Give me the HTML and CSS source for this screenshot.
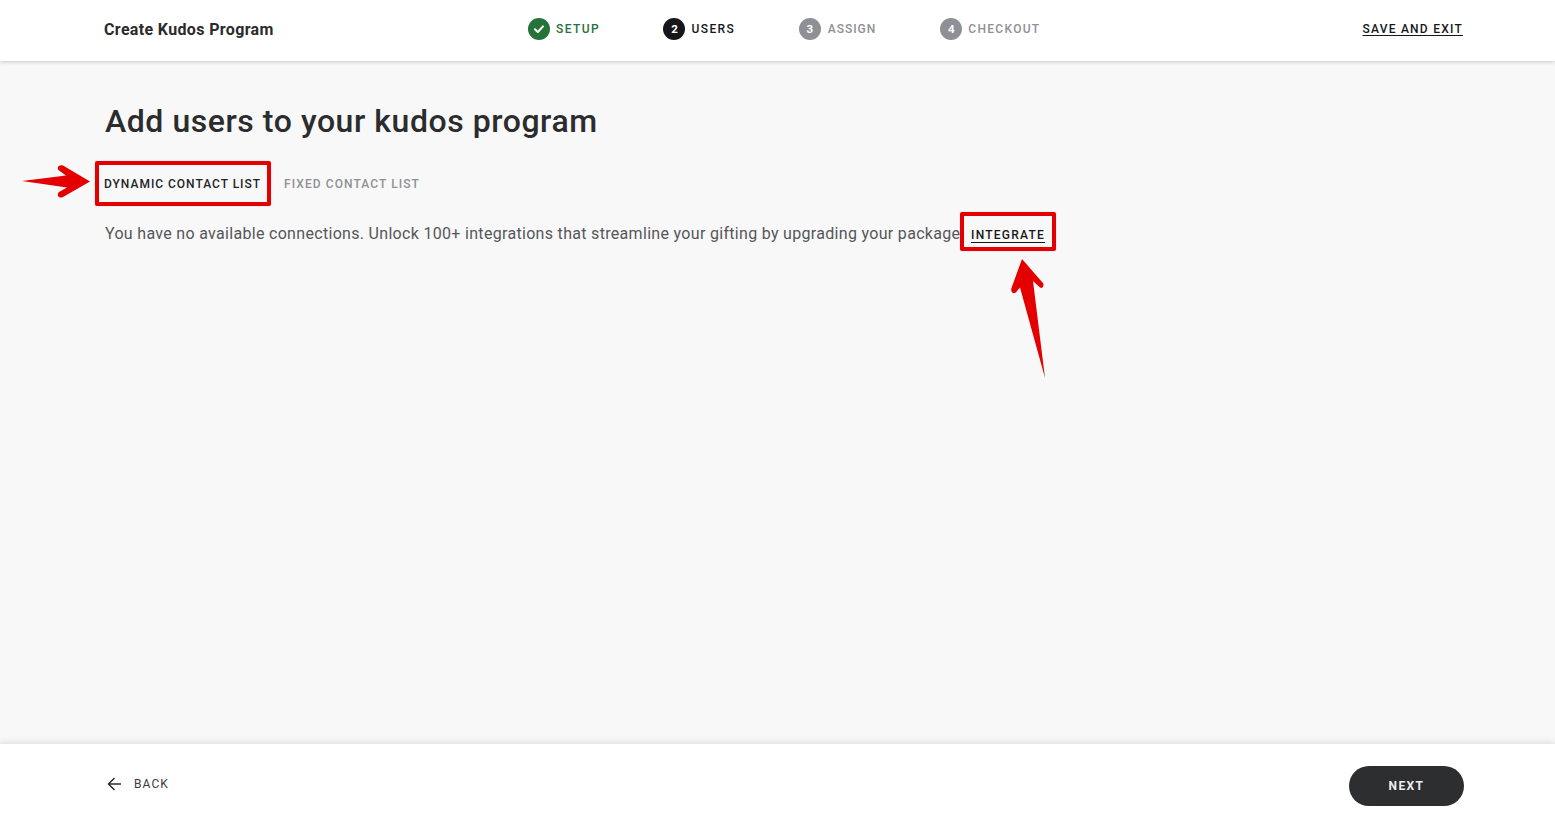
FILE: index.html
```html
<!DOCTYPE html>
<html lang="en">
<head>
<meta charset="utf-8">
<title>Create Kudos Program</title>
<link rel="stylesheet" href="styles.css">
</head>
<body>
<div class="page">
  <header class="topbar">
    <div class="brand">Create Kudos Program</div>
    <ol class="steps">
      <li class="step step-done">
        <span class="badge"><svg width="12" height="12" viewBox="0 0 12 12" aria-hidden="true"><path d="M2 6.300 4.800 9 10 3.400" fill="none" stroke="#fff" stroke-width="2.100" stroke-linecap="round" stroke-linejoin="round"/></svg></span>
        <span class="step-label">SETUP</span>
      </li>
      <li class="step step-current">
        <span class="badge">2</span>
        <span class="step-label">USERS</span>
      </li>
      <li class="step step-todo step-assign">
        <span class="badge">3</span>
        <span class="step-label">ASSIGN</span>
      </li>
      <li class="step step-todo step-checkout">
        <span class="badge">4</span>
        <span class="step-label">CHECKOUT</span>
      </li>
    </ol>
    <a class="exit" href="#">SAVE AND EXIT</a>
  </header>

  <main class="content">
    <h1 class="title">Add users to your kudos program</h1>
    <div class="tabs">
      <button class="tab tab-active">DYNAMIC CONTACT LIST</button>
      <button class="tab">FIXED CONTACT LIST</button>
    </div>
    <p class="notice">
      <span class="notice-text">You have no available connections. Unlock 100+ integrations that streamline your gifting by upgrading your package.</span>
      <a class="integrate" href="#">INTEGRATE</a>
    </p>
  </main>

  <footer class="bottombar">
    <a class="back" href="#">
      <svg width="16" height="16" viewBox="0 0 16 16" aria-hidden="true"><path d="M15 8H2.600M8.500 2 2.500 8 8.500 14" fill="none" stroke="#2d2e30" stroke-width="1.500"/></svg>
      <span>BACK</span>
    </a>
    <button class="next">NEXT</button>
  </footer>

  <div class="mark mark-tab"></div>
  <div class="mark mark-link"></div>
  <svg class="arrow arrow-right" width="70" height="36" viewBox="0 0 70 36" aria-hidden="true">
    <path d="M0 17 44 11.500 37 6.500C34 3.500 37 0 41 1.500L68 17.500 41 33C37 35 34 31 37 28L45 23.500Z" fill="#e40000"/>
  </svg>
  <svg class="arrow arrow-up" width="36" height="122" viewBox="0 0 36 122" aria-hidden="true">
    <path d="M35 120 23 23 29.500 29C33 32 35 26 32 24L12 1 1.500 30C0 35 5 37 7 33L10 29.500Z" fill="#e40000"/>
  </svg>
</div>
</body>
</html>
```
FILE: styles.css
```css
* { box-sizing: border-box; }
html, body { margin: 0; height: 100%; }
body {
  font-family: Roboto, "Liberation Sans", sans-serif;
  color: #2d2e30;
  background: #f8f8f8;
  overflow: hidden;
}
a { color: inherit; }
.page {
  position: relative;
  display: flex;
  flex-direction: column;
  height: 814px;
}
.topbar {
  position: relative;
  display: flex;
  align-items: center;
  height: 61px;
  padding: 0 92px 3px 104px;
  background: #fff;
  box-shadow: 0 1px 4px rgba(0, 0, 0, .2);
}
.brand {
  width: 424px;
  font-size: 16px;
  font-weight: 700;
  letter-spacing: .35px;
  color: #2b2b2d;
}
.steps {
  display: flex;
  flex: 1;
  margin: 0;
  padding: 0;
  list-style: none;
}
.step {
  display: flex;
  align-items: center;
  gap: 6px;
  margin-right: 63.500px;
  font-size: 12px;
  font-weight: 500;
  letter-spacing: 1.400px;
}
.step-assign { margin-right: 64px; gap: 7px; letter-spacing: 1px; }
.step-checkout { letter-spacing: 1.300px; }
.badge {
  display: flex;
  align-items: center;
  justify-content: center;
  width: 22px;
  height: 22px;
  border-radius: 50%;
  font-size: 11.500px;
  font-weight: 700;
  letter-spacing: 0;
  color: #fff;
}
.step-done { color: #26733a; }
.step-done .badge { background: #26733a; }
.step-current { color: #16171a; }
.step-current .badge { background: #16171a; }
.step-todo { color: #8f9095; }
.step-todo .badge { background: #8f9095; }
.exit {
  font-size: 12px;
  font-weight: 500;
  letter-spacing: 1.240px;
  color: #16171a;
  text-underline-offset: 2px;
}
.content {
  flex: 1;
  padding: 0 105px;
}
.title {
  margin: 42px 0 0;
  height: 36px;
  font-size: 32px;
  line-height: 36px;
  font-weight: 500;
  letter-spacing: .55px;
  color: #2b2c2e;
  white-space: nowrap;
}
.tabs {
  display: flex;
  gap: 23px;
  margin: 30px 0 0 -1px;
}
.tab {
  padding: 0;
  height: 30px;
  border: 0;
  background: none;
  font: 500 12px Roboto, "Liberation Sans", sans-serif;
  letter-spacing: 1.080px;
  color: #8f9095;
}
.tab-active { color: #232428; letter-spacing: .98px; }
.notice {
  display: flex;
  align-items: baseline;
  margin: 23px 0 0;
  font-size: 16px;
  line-height: 24px;
  color: #55565a;
  white-space: nowrap;
}
.notice-text { width: 866px; letter-spacing: .31px; }
.integrate {
  font-size: 12px;
  font-weight: 500;
  letter-spacing: 1.240px;
  color: #16171a;
  text-underline-offset: 3px;
}
.bottombar {
  display: flex;
  align-items: center;
  justify-content: space-between;
  height: 70px;
  padding: 14px 91px 0 106px;
  background: #fff;
  box-shadow: 0 -2px 6px rgba(0, 0, 0, .1);
  position: relative;
}
.back {
  display: flex;
  align-items: center;
  gap: 12px;
  margin-top: -4px;
  font-size: 12px;
  letter-spacing: 1.100px;
  color: #3a3b3e;
  text-decoration: none;
}
.next {
  width: 115px;
  height: 40px;
  border: 0;
  border-radius: 20px;
  background: #2d2e30;
  color: #eee;
  font: 700 12px Roboto, "Liberation Sans", sans-serif;
  letter-spacing: 1.400px;
}
.mark {
  position: absolute;
  border: 4px solid #e40000;
  border-radius: 2px;
  box-shadow: 0 0 1px rgba(0, 0, 0, .4);
}
.mark-tab { left: 95px; top: 161px; width: 176px; height: 45px; }
.mark-link { left: 960px; top: 212px; width: 96px; height: 39px; }
.arrow { position: absolute; }
.arrow-right { left: 22px; top: 164px; }
.arrow-up { left: 1010px; top: 258px; }
```
